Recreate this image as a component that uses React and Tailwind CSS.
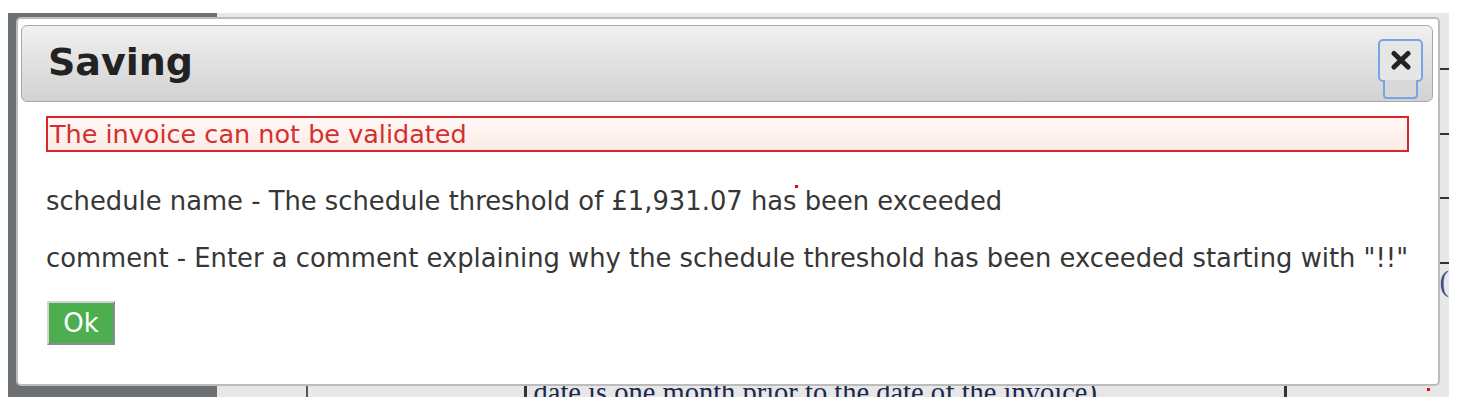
import React from 'react';

const texto = "font-['DejaVu_Sans','Liberation_Sans',sans-serif]";

// Boton de cerrar del titulo, con el contorno azul de foco.
function BotonCerrar() {
  return (
    <div className="flex flex-col items-center self-start mt-[13px] mr-[9px]">
      <div className="w-[45px] h-[43px] border-2 border-[#7ba3e4] rounded-[5px] bg-[#e6e6e6] flex items-center justify-center">
        <svg width="22" height="21" viewBox="0 0 22 21">
          <path d="M4 3.5 L18 17 M18 3.5 L4 17" stroke="#222" strokeWidth="5" strokeLinecap="round" />
        </svg>
      </div>
      <div className="relative -mt-[2px] w-[35px] h-[19px] border-2 border-t-0 border-[#7ba3e4] rounded-b-[4px] bg-[#d8d8d8]" />
    </div>
  );
}

// Tabla de la pagina que queda detras del fondo oscurecido.
function TablaFondo() {
  return (
    <div className="flex-1 flex bg-[#e7e7e7]">
      <div className="w-[89px]" />
      <div className="w-[218px] mt-[340px] border-l-2 border-[#555]" />
      <div className="w-[760px] mt-[340px] border-l-[3px] border-[#333] pl-[7px]">
        <p className="mt-[26px] font-['Liberation_Serif',serif] text-[28.5px] leading-none text-[#1c2750] whitespace-nowrap">
          date is one month prior to the date of the invoice)
        </p>
      </div>
      <div className="w-[155px] mt-[340px] border-l-[3px] border-[#333]" />
      <div className="flex-1 flex flex-col overflow-hidden">
        <div className="mt-[55px] h-[2px] bg-[#333]" />
        <div className="mt-[63px] h-[2px] bg-[#333]" />
        <div className="mt-[62px] h-[2px] bg-[#333]" />
        <div className="mt-[63px] h-[2px] bg-[#333]" />
        <p className="mt-[4px] pl-[1px] font-['Liberation_Serif',serif] text-[28.5px] leading-none text-[#3a4d86]">(</p>
      </div>
    </div>
  );
}

export default function App() {
  return (
    <div className={`w-[1465px] h-[414px] bg-white pt-[13px] pl-[8px] ${texto}`}>
      <div className="relative w-[1441px] h-[384px] overflow-hidden flex">
        <div className="w-[210px] bg-[#6d7072]" />
        <TablaFondo />

        <span className="absolute left-[1419px] top-[375px] w-[3px] h-[3px] bg-[#ff0000]" />

        <div className="absolute left-[8px] top-[4px] w-[1424px] h-[369px] bg-white border-2 border-[#bcbcbc] rounded-[5px] pt-[6px] pl-[3px] pr-[5px]">
          <div className="h-[77px] border border-[#a9a9a9] rounded-[6px] bg-gradient-to-b from-[#f0f0f0] to-[#d2d2d2] flex justify-between">
            <h1 className="self-center pl-[26px] pb-[3px] text-[38px] leading-none font-bold text-[#222]">Saving</h1>
            <BotonCerrar />
          </div>

          <div className="pl-[25px] pr-[24px]">
            <div className="mt-[14px] h-[36px] border-2 border-[#d9262b] bg-gradient-to-b from-[#fff8f6] to-[#fdebe6] pl-[2px]">
              <p className="text-[25.5px] leading-[32px] text-[#d3302f]">The invoice can not be validated</p>
            </div>

            <p className="mt-[33px] text-[25.8px] leading-[32px] text-[#363636] whitespace-nowrap">
              schedule name - The schedule threshold of £1,931.07 has been exceeded
            </p>
            <p className="mt-[25px] text-[25.8px] leading-[32px] text-[#363636] whitespace-nowrap">
              comment - Enter a comment explaining why the schedule threshold has been exceeded starting with "!!"
            </p>

            <button className="mt-[27px] ml-[1px] w-[68px] h-[44px] bg-[#4cae4f] border-2 border-t-[#d4d4d4] border-l-[#d4d4d4] border-r-[#8c8c8c] border-b-[#8c8c8c] text-white text-[26px] leading-none flex items-center justify-center">
              Ok
            </button>
          </div>

          <span className="absolute left-[777px] top-[166px] w-[3px] h-[3px] bg-[#ff0000]" />
        </div>
      </div>
    </div>
  );
}
